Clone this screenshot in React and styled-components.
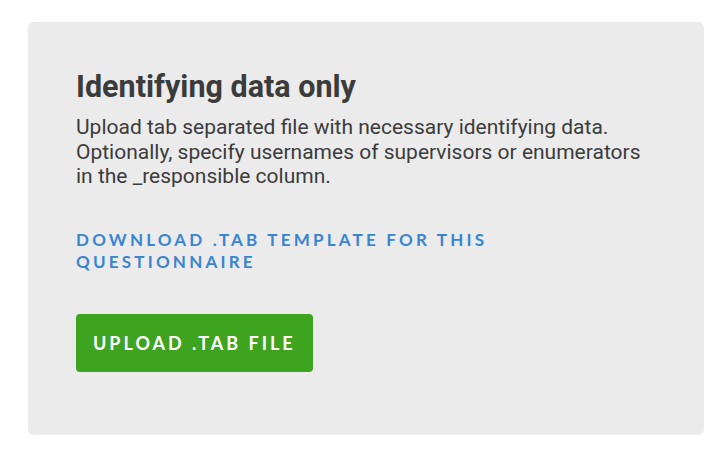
import React from 'react'
import styled, { createGlobalStyle } from 'styled-components'

const Global = createGlobalStyle`
  body {
    margin: 0;
    background: #fff;
    font-family: Roboto, "Liberation Sans", sans-serif;
  }
`

const Page = styled.div`
  padding: 22px 16px 16px 28px;
`

const Card = styled.div`
  width: 676px;
  height: 413px;
  box-sizing: border-box;
  background: #ebebeb;
  border-radius: 6px;
  padding: 45px 48px 0 48px;
`

const Title = styled.h2`
  margin: 0;
  font-size: 30.5px;
  font-weight: 700;
  color: #3b3b3b;
  line-height: 40px;
`

const Text = styled.p`
  margin: 8px 0 0;
  font-size: 21px;
  line-height: 24.5px;
  color: #3b3b3b;
  width: 575px;
`

const Link = styled.a`
  display: block;
  margin-top: 40px;
  width: 470px;
  font-family: Lato, "DejaVu Sans", sans-serif;
  font-weight: 700;
  font-size: 17px;
  line-height: 22px;
  letter-spacing: 3.2px;
  text-transform: uppercase;
  color: #3a84d0;
  text-decoration: none;
`

const Button = styled.button`
  margin-top: 41px;
  height: 58px;
  padding: 0 17px;
  border: none;
  border-radius: 4px;
  background: #3ea31f;
  color: #fff;
  font-family: Lato, "DejaVu Sans", sans-serif;
  font-weight: 700;
  font-size: 18px;
  letter-spacing: 3px;
  text-transform: uppercase;
`

export default function App() {
  return (
    <Page>
      <Global />
      <Card>
        <Title>Identifying data only</Title>
        <Text>
          Upload tab separated file with necessary identifying data. Optionally, specify usernames of supervisors or enumerators in the _responsible column.
        </Text>
        <Link href="#">Download .tab template for this questionnaire</Link>
        <Button>Upload .tab file</Button>
      </Card>
    </Page>
  )
}
